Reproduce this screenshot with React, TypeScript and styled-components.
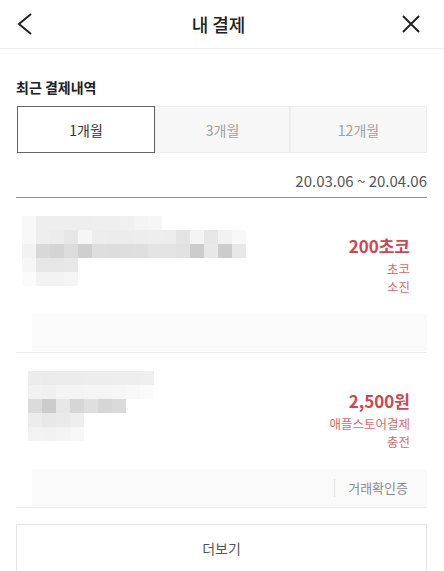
import React from "react";
import styled, { createGlobalStyle } from "styled-components";

const GlobalStyle = createGlobalStyle`
  html, body {
    margin: 0;
    padding: 0;
    background: #fff;
  }
  body {
    font-family: "Noto Sans CJK KR", "Noto Sans", sans-serif;
    color: #222;
  }
`;

// 모자이크 처리된 상품명 (셀 색상 값, 0 = 빈칸)
const mosaicFirst = [
  [0xf8, 0xee, 0xee, 0xee, 0xee, 0xef, 0xef, 0xf0, 0xf4, 0xf6, 0, 0, 0, 0, 0, 0],
  [0xf8, 0xee, 0xec, 0xe6, 0xf6, 0xed, 0xec, 0xec, 0xed, 0xee, 0xed, 0xe4, 0xf4, 0xe6, 0xf2, 0xf8],
  [0xf2, 0xd8, 0xd4, 0xdc, 0xcf, 0xde, 0xdd, 0xde, 0xdf, 0xe4, 0xe4, 0xe2, 0xcc, 0xe8, 0xcc, 0xe8],
  [0xf6, 0xe6, 0xe6, 0xe8, 0, 0, 0, 0, 0, 0, 0, 0, 0, 0, 0, 0],
  [0xfb, 0xf3, 0xf3, 0xf5, 0, 0, 0, 0, 0, 0, 0, 0, 0, 0, 0, 0],
];

const mosaicSecond = [
  [0xec, 0xeb, 0xec, 0xec, 0xed, 0xed, 0xee, 0xee, 0xef],
  [0xf2, 0xf0, 0xf4, 0xf4, 0xf5, 0xf5, 0xf6, 0xf8, 0xfb],
  [0xdb, 0xcc, 0xe6, 0xd6, 0xdf, 0xd6, 0xda, 0, 0],
  [0xec, 0xe8, 0xea, 0xee, 0, 0, 0, 0, 0],
  [0xf3, 0xf2, 0xf4, 0xf8, 0, 0, 0, 0, 0],
];

const payments = [
  {
    id: 1,
    mosaic: mosaicFirst,
    offset: 6,
    amount: "200초코",
    lines: ["초코", "소진"],
    receipt: false,
  },
  {
    id: 2,
    mosaic: mosaicSecond,
    offset: 12,
    amount: "2,500원",
    lines: ["애플스토어결제", "충전"],
    receipt: true,
  },
];

const periods = ["1개월", "3개월", "12개월"];

function Mosaic({ cells }: { cells: number[][] }) {
  const size = 14;
  const cols = cells[0].length;
  return (
    <svg width={cols * size} height={cells.length * size}>
      {cells.map((row, y) =>
        row.map((v, x) =>
          v ? (
            <rect
              key={`${x}-${y}`}
              x={x * size}
              y={y * size}
              width={size}
              height={size}
              fill={`rgb(${v},${v},${v})`}
            />
          ) : null
        )
      )}
    </svg>
  );
}

export default function App() {
  return (
    <>
      <GlobalStyle />
      <Page>
        <Header>
          <IconButton aria-label="뒤로">
            <svg width="24" height="24" viewBox="0 0 24 24">
              <polyline
                points="17,2 5,12 17,22"
                fill="none"
                stroke="#222"
                strokeWidth="2"
              />
            </svg>
          </IconButton>
          <Title>내 결제</Title>
          <IconButton aria-label="닫기">
            <svg width="24" height="24" viewBox="0 0 24 24">
              <path
                d="M4 4 L20 20 M20 4 L4 20"
                fill="none"
                stroke="#222"
                strokeWidth="2"
              />
            </svg>
          </IconButton>
        </Header>

        <Content>
          <SectionTitle>최근 결제내역</SectionTitle>
          <Tabs>
            {periods.map((label, i) => (
              <Tab key={label} $active={i === 0}>
                {label}
              </Tab>
            ))}
          </Tabs>
          <DateRange>20.03.06 ~ 20.04.06</DateRange>

          <List>
            {payments.map((item) => (
              <Item key={item.id}>
                <ItemRow>
                  <MosaicWrap $offset={item.offset}>
                    <Mosaic cells={item.mosaic} />
                  </MosaicWrap>
                  <Info>
                    <Amount>{item.amount}</Amount>
                    {item.lines.map((line) => (
                      <SubLine key={line}>{line}</SubLine>
                    ))}
                  </Info>
                </ItemRow>
                <ActionBox>
                  {item.receipt && (
                    <>
                      <Divider />
                      <ReceiptLink>거래확인증</ReceiptLink>
                    </>
                  )}
                </ActionBox>
              </Item>
            ))}
          </List>

          <MoreButton>더보기</MoreButton>
        </Content>
      </Page>
    </>
  );
}

const Page = styled.div`
  width: 444px;
  min-height: 571px;
  overflow: hidden;
`;

const Header = styled.header`
  height: 48px;
  display: flex;
  align-items: center;
  justify-content: space-between;
  padding: 0 21px 0 14px;
  border-bottom: 1px solid #efefef;
`;

const IconButton = styled.button`
  width: 24px;
  height: 24px;
  padding: 0;
  border: 0;
  background: none;
  display: flex;
`;

const Title = styled.h1`
  margin: 0;
  font-size: 18px;
  font-weight: 500;
  color: #222;
`;

const Content = styled.main`
  padding: 28px 17px 0 16px;
`;

const SectionTitle = styled.h2`
  margin: 0;
  font-size: 14px;
  line-height: 20px;
  font-weight: 700;
  color: #222;
`;

const Tabs = styled.div`
  margin-top: 9px;
  display: grid;
  grid-template-columns: 138px 135px 1fr;
  margin-left: 1px;
`;

const Tab = styled.button<{ $active: boolean }>`
  height: 47px;
  font-family: inherit;
  font-size: 14px;
  padding: 0;
  color: ${(p) => (p.$active ? "#333" : "#a0a0a0")};
  background: ${(p) => (p.$active ? "#fff" : "#f7f7f7")};
  border: 1px solid ${(p) => (p.$active ? "#666" : "#ededed")};
`;

const DateRange = styled.div`
  margin-top: 18px;
  text-align: right;
  font-size: 15px;
  line-height: 20px;
  color: #555;
  padding-bottom: 6px;
  border-bottom: 1px solid #8c8c8c;
`;

const List = styled.div``;

const Item = styled.div`
  padding-top: 18px;
  border-bottom: 1px solid #ececec;
`;

const ItemRow = styled.div`
  display: flex;
  justify-content: space-between;
  align-items: flex-start;
`;

const MosaicWrap = styled.div<{ $offset: number }>`
  margin-left: ${(p) => p.$offset}px;
  display: flex;
  filter: blur(0.6px);
`;

const Info = styled.div`
  margin-top: 19px;
  padding-right: 17px;
  text-align: right;
`;

const Amount = styled.div`
  font-size: 17px;
  line-height: 22px;
  font-weight: 700;
  color: #d3454e;
  margin-bottom: 3px;
`;

const SubLine = styled.div`
  font-size: 12.5px;
  line-height: 18px;
  color: #e0676d;
`;

const ActionBox = styled.div`
  margin: 18px 0 1px 16px;
  height: 37px;
  background: #fafafa;
  display: flex;
  align-items: center;
  justify-content: flex-end;
  padding-right: 19px;
`;

const Divider = styled.span`
  width: 1px;
  height: 18px;
  background: #e2e2e2;
  margin-right: 13px;
`;

const ReceiptLink = styled.span`
  font-size: 13px;
  color: #8a8a8a;
`;

const MoreButton = styled.button`
  margin-top: 16px;
  width: 100%;
  height: 48px;
  border: 1px solid #e6e6e6;
  background: #fff;
  font-family: inherit;
  font-size: 14px;
  color: #555;
`;
